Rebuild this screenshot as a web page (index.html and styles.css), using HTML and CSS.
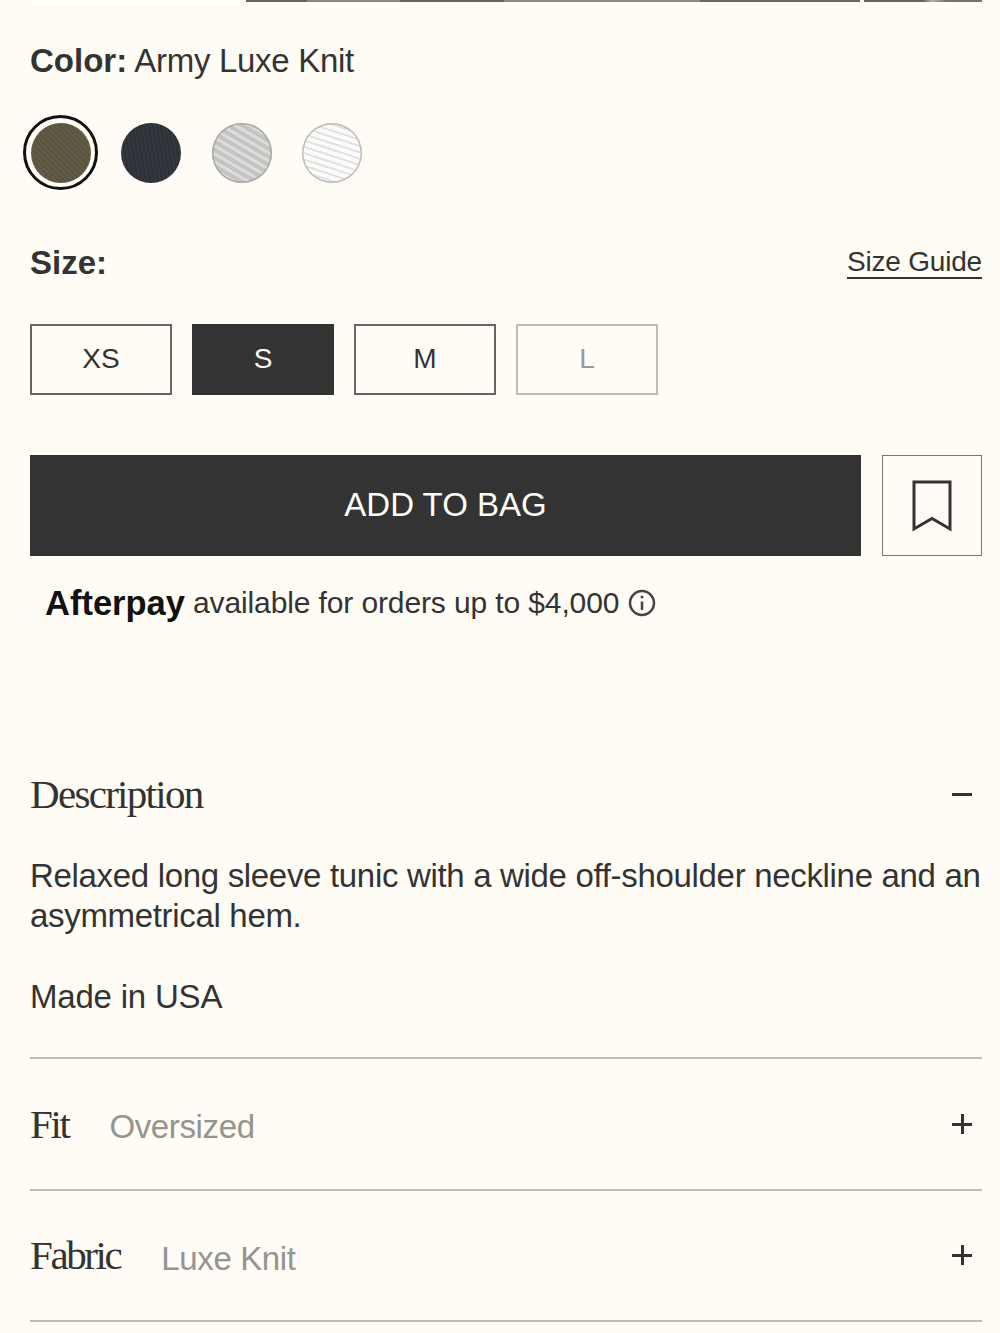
FILE: index.html
```html
<!DOCTYPE html>
<html>
    <head>
        <meta charset="utf-8">
        <title>Product details</title>
        <link rel="stylesheet" href="styles.css">
    </head>
    <body>
        <div class="gallery-strip">
            <div class="strip-white"></div>
            <div class="strip-photo"></div>
            <div class="strip-photo-small"></div>
        </div>
        <main class="product">
            <p class="color-label"><b>Color:</b> <span class="color-name">Army Luxe Knit</span></p>
            <div class="swatches">
                <span class="swatch-ring"><span class="swatch army"></span></span>
                <span class="swatch navy"></span>
                <span class="swatch grey"></span>
                <span class="swatch white"></span>
            </div>
            <div class="size-head">
                <b class="size-label">Size:</b>
                <a href="#" class="size-guide">Size Guide</a>
            </div>
            <div class="sizes">
                <button class="size">XS</button>
                <button class="size selected">S</button>
                <button class="size">M</button>
                <button class="size disabled">L</button>
            </div>
            <div class="buy-row">
                <button class="add-bag">ADD TO BAG</button>
                <button class="save">
                    <svg width="40" height="52" viewBox="0 0 40 52" fill="none" stroke="#333" stroke-width="3">
                        <path d="M2 2H38V49L20 38.500L2 49Z"/>
                    </svg>
                </button>
            </div>
            <div class="afterpay">
                <b class="afterpay-name">Afterpay</b>
                <span class="afterpay-text">available for orders up to $4,000</span>
                <svg class="info-icon" width="28" height="28" viewBox="0 0 28 28" fill="none" stroke="#444" stroke-width="2.500">
                    <circle cx="14" cy="14" r="12"/>
                    <path d="M14 12.500V21"/>
                    <circle cx="14" cy="8" r="1.500" fill="#444" stroke="none"/>
                </svg>
            </div>
            <section class="description">
                <div class="acc-head">
                    <h2>Description</h2>
                    <span class="minus"></span>
                </div>
                <p class="desc-text">Relaxed long sleeve tunic with a wide off-shoulder neckline and an asymmetrical hem.</p>
                <p class="made-in">Made in USA</p>
            </section>
            <section class="acc-row">
                <h2>Fit</h2>
                <span class="acc-value">Oversized</span>
                <span class="plus"></span>
            </section>
            <section class="acc-row">
                <h2>Fabric</h2>
                <span class="acc-value">Luxe Knit</span>
                <span class="plus"></span>
            </section>
        </main>
    </body>
</html>
```

FILE: styles.css
```css
body{
    margin: 0;
    background-color: #fffcf5;
    color: #333333;
    font-family: "Liberation Sans", Arial, sans-serif;
}
p, h2{
    margin: 0;
}
button{
    font-family: inherit;
    background: none;
    border: none;
    padding: 0;
}

.gallery-strip{
    display: flex;
    height: 2px;
    margin: 0 18px 0 30px;
}
.strip-white{
    width: 216px;
    background-color: #ffffff;
}
.strip-photo{
    width: 614px;
    margin-right: 4px;
    background: linear-gradient(to right, #6b6558 0 10%, #8d8877 10% 25%, #6a6456 25% 42%, #8f8a7b 42% 74%, #6f675a 74% 100%);
}
.strip-photo-small{
    flex: 1;
    background: linear-gradient(to right, #66645e 0 50%, #b0aea8 58%, #77746c 70%, #77746c 100%);
}

.product{
    padding: 0 18px 0 30px;
}
.color-label{
    margin-top: 39px;
    font-size: 33px;
    line-height: 40px;
}
.color-name{
    margin-left: -2px;
    letter-spacing: -0.3px;
}

.swatches{
    display: flex;
    align-items: center;
    gap: 30.500px;
    margin-top: 34px;
    margin-left: -7px;
}
.swatch{
    display: block;
    width: 60px;
    height: 60px;
    border-radius: 50%;
}
.swatch-ring{
    padding: 4.500px;
    margin-right: -7.500px;
    border: 3px solid #111111;
    border-radius: 50%;
}
.army{
    background: repeating-linear-gradient(45deg, #5a5540 0 2px, #625c46 2px 4px);
}
.navy{
    background: repeating-linear-gradient(80deg, #2e3037 0 2px, #35373e 2px 4px);
}
.grey{
    background: repeating-linear-gradient(30deg, #c4c4c2 0 4px, #dcdcda 4px 7px);
    box-shadow: inset 0 0 0 1.500px #a9a9a5;
}
.white{
    background: repeating-linear-gradient(18deg, #fbfbfa 0 4px, #e2e2e1 4px 6px);
    box-shadow: inset 0 0 0 1.500px #bdbdb9;
}

.size-head{
    display: flex;
    justify-content: space-between;
    align-items: center;
    margin-top: 53px;
}
.size-label{
    font-size: 33px;
    line-height: 40px;
}
.size-guide{
    margin-bottom: 2px;
    color: #333333;
    font-size: 28px;
    line-height: 31px;
    letter-spacing: -0.2px;
    text-decoration: none;
    border-bottom: 2px solid #333333;
}

.sizes{
    display: flex;
    gap: 20px;
    margin-top: 41px;
}
.size{
    width: 142px;
    height: 70.500px;
    border: 2px solid #666666;
    color: #333333;
    font-size: 28px;
}
.selected{
    border-color: #333333;
    background-color: #333333;
    color: #fffcf5;
}
.disabled{
    border-color: #bcbcb6;
    color: #9a9a94;
}

.buy-row{
    display: flex;
    gap: 21px;
    margin-top: 60.500px;
}
.add-bag{
    flex: 1;
    height: 101px;
    padding-bottom: 2px;
    background-color: #333333;
    color: #fffcf5;
    font-size: 33px;
}
.save{
    display: flex;
    align-items: center;
    justify-content: center;
    width: 100px;
    height: 101px;
    border: 1.500px solid #777777;
}

.afterpay{
    display: flex;
    align-items: center;
    gap: 8px;
    margin-top: 27px;
    margin-left: 15px;
    font-size: 30px;
    line-height: 40px;
}
.afterpay-name{
    color: #111111;
    font-size: 34.500px;
}
.afterpay-text{
    letter-spacing: -0.12px;
}
.info-icon{
    margin-left: 1px;
}

h2{
    font-family: "Liberation Serif", serif;
    font-weight: normal;
    font-size: 41px;
    line-height: 50px;
    letter-spacing: -2.400px;
}
.description{
    margin-top: 146px;
    padding-bottom: 40px;
    border-bottom: 2px solid #bdbdb7;
}
.description h2{
    letter-spacing: -1.700px;
}
.acc-head{
    display: flex;
    justify-content: space-between;
    align-items: center;
}
.minus{
    width: 20px;
    height: 3px;
    margin-right: 10px;
}
.minus, .plus::before, .plus::after{
    background-color: #333333;
}
.desc-text{
    margin-top: 37px;
    font-size: 33px;
    line-height: 40px;
    letter-spacing: -0.32px;
}
.made-in{
    margin-top: 41px;
    font-size: 33px;
    line-height: 40px;
    letter-spacing: -0.2px;
}

.acc-row{
    display: flex;
    align-items: center;
    height: 129.500px;
    border-bottom: 2px solid #bdbdb7;
}
.acc-value{
    margin-left: 41px;
    padding-top: 7px;
    color: #949490;
    font-size: 33px;
    letter-spacing: -0.37px;
}
.plus{
    position: relative;
    width: 20px;
    height: 20px;
    margin-left: auto;
    margin-right: 10px;
}
.plus::before, .plus::after{
    content: "";
    position: absolute;
}
.plus::before{
    left: 0;
    top: 9px;
    width: 20px;
    height: 3px;
}
.plus::after{
    left: 9px;
    top: 0;
    width: 3px;
    height: 20px;
}
```
